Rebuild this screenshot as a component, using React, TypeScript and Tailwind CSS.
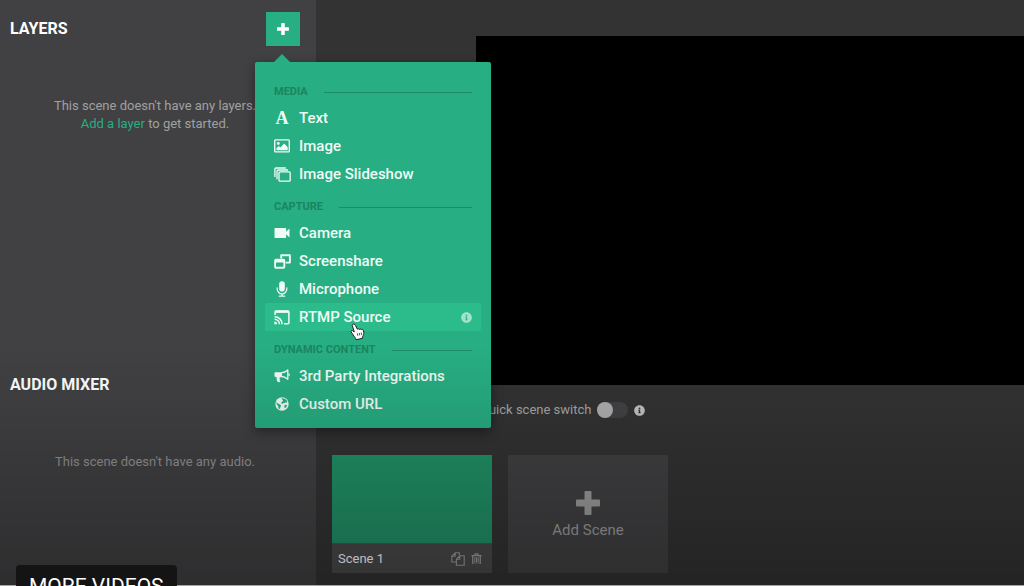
import type { ReactNode } from "react";
import { FaInfoCircle } from "react-icons/fa";
import { MdVideocam } from "react-icons/md";

function PlusIcon({ className }: { className: string }) {
  return (
    <svg viewBox="0 0 24 24" className={className} fill="currentColor">
      <path d="M9.500 0h5a1 1 0 0 1 1 1v7.500H23a1 1 0 0 1 1 1v5a1 1 0 0 1-1 1h-7.500V23a1 1 0 0 1-1 1h-5a1 1 0 0 1-1-1v-7.500H1a1 1 0 0 1-1-1v-5a1 1 0 0 1 1-1h7.500V1a1 1 0 0 1 1-1z" />
    </svg>
  );
}

function ImageIcon() {
  return (
    <svg viewBox="0 0 16 14" className="w-4" fill="none" stroke="currentColor">
      <rect x="0.7" y="0.9" width="14.6" height="12" rx="0.8" strokeWidth="1.4" />
      <circle cx="4.3" cy="4.5" r="1.4" fill="currentColor" stroke="none" />
      <path d="M2.400 11.300V9.200l2.400-2.300 1.600 1.600 3.800-3.900 3.500 3.600v3.100z" fill="currentColor" stroke="none" />
    </svg>
  );
}

function SlideshowIcon() {
  return (
    <svg viewBox="0 0 17 15" className="w-[17px]" fill="none" stroke="currentColor" strokeWidth="1.3">
      <rect x="5" y="4.9" width="11.2" height="9.300" rx="1" />
      <path d="M3 12.200V4a1 1 0 0 1 1-1h10" />
      <path d="M.9 10V2a1 1 0 0 1 1-1h10" />
    </svg>
  );
}

function ScreenshareIcon() {
  return (
    <svg viewBox="0 0 17 15" className="w-[17px]" fill="none" stroke="currentColor" strokeWidth="1.900">
      <path d="M7.200 4.600V1.200h8.700v7.400h-4.200" strokeLinejoin="round" />
      <rect x="1.100" y="5.800" width="9.200" height="8" rx="0.8" />
      <path d="M1 7.200h9.400" strokeWidth="2.600" />
    </svg>
  );
}

function MicIcon() {
  return (
    <svg viewBox="0 0 12 16" className="h-4" fill="none" stroke="currentColor" strokeLinecap="round">
      <rect x="3.200" y="0.300" width="5.600" height="10.200" rx="2.800" fill="currentColor" stroke="none" />
      <path d="M1.200 6.800v1.300a4.800 4.800 0 0 0 9.600 0V6.800M6 13v2.200M3.300 15.200h5.400" strokeWidth="1.200" />
    </svg>
  );
}

function CastIcon() {
  return (
    <svg viewBox="0 0 16 15" className="w-4" fill="none" stroke="currentColor">
      <path d="M1.100 5V2a1 1 0 0 1 1-1h11.800a1 1 0 0 1 1 1v10.800a1 1 0 0 1-1 1H10" strokeWidth="1.500" />
      <path d="M1 1.800h14" strokeWidth="2.200" />
      <path d="M.6 6.700a7.500 7.500 0 0 1 7.500 7.500M.6 9.300a4.900 4.900 0 0 1 4.900 4.900" strokeWidth="1.500" />
      <path d="M.4 11.500a2.800 2.800 0 0 1 2.800 2.800H.4z" fill="currentColor" stroke="none" />
    </svg>
  );
}

function BullhornIcon() {
  return (
    <svg viewBox="0 0 16 14" className="w-4" fill="none" stroke="currentColor">
      <path
        d="M8 3.200H1.700C.9 3.200.5 3.700.5 4.400v2.300c0 .8.5 1.200 1.200 1.200h.9c-.2 1.700.2 3.400.9 4.900.9.500 2.100.5 3-.1-.7-.6-1-1.200-.5-1.900-.6-.7-.7-1.500-.3-2.400L8 8z"
        fill="currentColor"
        stroke="none"
      />
      <path d="M7.800 3.700c2.500-.2 4.500-1.200 6-2.700v9.300c-1.500-1.500-3.500-2.500-6-2.800" strokeWidth="1.300" strokeLinejoin="round" />
      <path d="M14.600 4.400c.8.500.8 2 0 2.500" strokeWidth="1.200" />
    </svg>
  );
}

function GlobeIcon() {
  return (
    <svg viewBox="0 0 14 14" className="w-[14px]" fill="#27ae82">
      <circle cx="7" cy="7" r="6.700" fill="currentColor" />
      <path d="M6.300 1.600l1.800-.4 2.900 1.300 1.400 2.300-.9 1-1-.5-1 .9-1.400-.3-.5 1.200-1.300-.7.300-1.300 1.400-.8-.2-1.200z" />
      <path d="M1.400 4.600l1.400 2 1.700.6 1.600 1.300-.6 1.400-.8 2.400-1.200-1.100-.3-2.200-1.400-1.600z" />
      <path d="M9.800 8.100l1.500-.4.800.8-1.200 2-1 .7-.6-1.500z" />
    </svg>
  );
}

function CopyIcon() {
  return (
    <svg viewBox="0 0 14 14" className="w-[14px]" fill="none" stroke="currentColor" strokeWidth="1.100" strokeLinejoin="round">
      <path d="M5.200 10H.8V4.200L4.200.8h4.200v2.600M4.200.8v3.400H.8" />
      <path d="M5.400 7.200 8.800 3.800h4.400v9.400H5.400zM8.800 3.800v3.400H5.400" />
    </svg>
  );
}

function TrashIcon() {
  return (
    <svg viewBox="0 0 12 13" className="w-[11px]" fill="none" stroke="currentColor">
      <path d="M.5 2.800h11M4 2.600l.6-1.700h2.800L8 2.600" strokeWidth="1.400" />
      <path d="M1.900 3v8.300c0 .7.4 1.100 1 1.100h6.200c.6 0 1-.4 1-1.100V3" strokeWidth="1.400" />
      <path d="M4.200 4.600v6M6 4.600v6M7.800 4.600v6" strokeWidth="1.100" />
    </svg>
  );
}

function HandCursor() {
  return (
    <svg
      viewBox="0 0 16 18"
      className="pointer-events-none absolute left-[85px] top-[20px] z-10 w-4"
      fill="#fff"
      stroke="#222"
      strokeLinejoin="round"
    >
      <path d="M4 1.200c-.9-.4-2 .3-1.700 1.400l2 6.400-1.600-1.300c-.9-.7-2.100.3-1.500 1.300l2.800 4.200c.5.8 1.200 1.300 1.600 2.100l.5 1.500 6.600-1.600-.1-1.700c.8-1.300 1.400-2.700 1.100-4.300l-.5-2.100c-.3-1-1.500-1-1.800-.3-.2-.9-1.500-1.200-2-.3-.4-.9-1.600-1-2-.3L5.300 2.200C5.100 1.700 4.600 1.300 4 1.200z" />
      <path d="m7.300 10.300.6 2.500M9.300 9.900l.5 2.500M11.200 9.500l.5 2.400" strokeWidth="0.8" />
    </svg>
  );
}

type Item = { label: string; icon: ReactNode; active?: boolean };

const groups: { title: string; items: Item[] }[] = [
  {
    title: "MEDIA",
    items: [
      { label: "Text", icon: <span aria-hidden="true" className="font-['Liberation_Serif',serif] text-lg font-bold">A</span> },
      { label: "Image", icon: <ImageIcon /> },
      { label: "Image Slideshow", icon: <SlideshowIcon /> },
    ],
  },
  {
    title: "CAPTURE",
    items: [
      { label: "Camera", icon: <MdVideocam className="size-5" /> },
      { label: "Screenshare", icon: <ScreenshareIcon /> },
      { label: "Microphone", icon: <MicIcon /> },
      { label: "RTMP Source", icon: <CastIcon />, active: true },
    ],
  },
  {
    title: "DYNAMIC CONTENT",
    items: [
      { label: "3rd Party Integrations", icon: <BullhornIcon /> },
      { label: "Custom URL", icon: <GlobeIcon /> },
    ],
  },
];

function LayerMenu() {
  return (
    <div className="absolute -left-[11px] top-[50px] z-10 w-[236px] rounded-xs bg-[#27ae82] px-[10px] pb-[10px] pt-[11px] shadow-[0_4px_12px_rgba(0,0,0,0.4)]">
      <div className="absolute -top-2 left-[19px] border-x-8 border-b-8 border-x-transparent border-b-[#27ae82]" />
      {groups.map((group) => (
        <div key={group.title}>
          <div className="flex h-[31px] items-center gap-4 px-[9px] pt-[7px]">
            <h3 className="text-[11px] font-bold text-[#1a8560]">{group.title}</h3>
            <div className="h-px flex-1 bg-[#1d8c66]" />
          </div>
          {group.items.map((item) => (
            <button
              key={item.label}
              type="button"
              className={`relative flex h-7 w-full items-center gap-[9px] rounded-xs px-[9px] text-[15px] font-medium text-[#f0fbf6] ${
                item.active ? "bg-[#2cbc8c]" : ""
              }`}
            >
              <span className="flex w-4 shrink-0 items-center justify-center *:shrink-0">{item.icon}</span>
              {item.label}
              {item.active && (
                <>
                  <FaInfoCircle className="ml-auto size-[11px] text-[#a5e2ca]" />
                  <HandCursor />
                </>
              )}
            </button>
          ))}
        </div>
      ))}
    </div>
  );
}

function Sidebar() {
  return (
    <aside className="flex w-[316px] shrink-0 flex-col bg-[#414143]">
      <section className="h-[356px]">
        <div className="flex items-start justify-between pl-[10px] pr-4 pt-3">
          <h2 className="text-base leading-[34px] font-bold text-white">LAYERS</h2>
          <div className="relative">
            <button
              type="button"
              aria-label="Add layer"
              className="flex size-[34px] items-center justify-center bg-[#27ae82] text-white"
            >
              <PlusIcon className="size-3" />
            </button>
            <LayerMenu />
          </div>
        </div>
        <p className="mt-[51px] pr-[6px] text-center text-[13px] leading-[18px] text-[#a0a0a0]">
          This scene doesn't have any layers.
          <br />
          <a href="#add-layer" className="text-[#27ae82]">Add a layer</a> to get started.
        </p>
      </section>
      <section className="pt-3">
        <h2 className="pl-[10px] text-base leading-[34px] font-bold text-white">AUDIO MIXER</h2>
        <p className="mt-[51px] pr-[6px] text-center text-[13px] leading-[18px] text-[#929292]">
          This scene doesn't have any audio.
        </p>
      </section>
    </aside>
  );
}

function Scenes() {
  return (
    <div className="flex gap-4 pl-4 pt-[20px]">
      <article className="w-40 bg-[#4a4a4b]">
        <div className="h-[89px] border-b border-[#29664f] bg-[#219268]" />
        <div className="flex h-[29px] items-center gap-[6px] px-[6px] text-[13px] text-white">
          <h3 className="flex-1">Scene 1</h3>
          <button type="button" aria-label="Duplicate scene" className="text-[#9c9c9c]">
            <CopyIcon />
          </button>
          <button type="button" aria-label="Delete scene" className="mr-1 text-[#9c9c9c]">
            <TrashIcon />
          </button>
        </div>
      </article>
      <button
        type="button"
        className="flex h-[118px] w-40 flex-col items-center justify-center gap-1 bg-[#414143] pt-1 text-[15px] text-[#9c9c9c]"
      >
        <PlusIcon className="size-6" />
        Add Scene
      </button>
    </div>
  );
}

export default function App() {
  return (
    <div className="relative flex h-screen overflow-hidden bg-[#333333] font-[Roboto,sans-serif]">
      <Sidebar />
      <main className="flex-1 pt-9">
        <div className="ml-40 h-[349px] bg-black" />
        <div className="ml-40 flex h-[50px] items-center gap-[6px] pl-1 text-[13px] text-[#a8a8a8]">
          <label htmlFor="quick-switch">Quick scene switch</label>
          <input
            id="quick-switch"
            type="checkbox"
            role="switch"
            className="h-4 w-[31px] appearance-none rounded-full bg-[#434346] before:block before:size-4 before:rounded-full before:bg-[#b0b0b0] checked:before:ml-auto"
          />
          <FaInfoCircle className="size-[11px] text-[#c4c4c4]" />
        </div>
        <Scenes />
      </main>
      <div className="pointer-events-none absolute inset-x-0 bottom-0 z-20 h-60 border-b border-[#a5a5a5] bg-linear-to-b from-black/0 to-black/30" />
      <button
        type="button"
        className="absolute -bottom-[23px] left-4 z-20 h-11 rounded-sm bg-[#141414] px-[13px] text-[21px] text-white"
      >
        MORE VIDEOS
      </button>
    </div>
  );
}
